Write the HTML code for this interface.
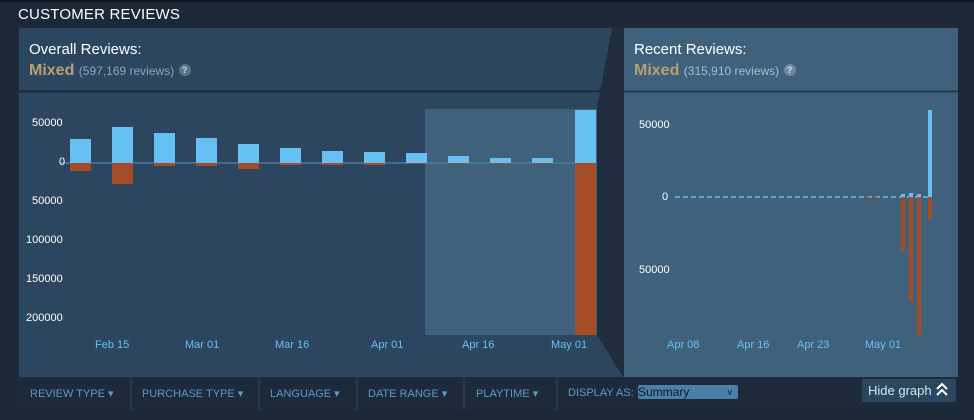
<!DOCTYPE html>
<html><head><style>
body{margin:0;width:974px;height:420px;background:#1b2838;font-family:"Liberation Sans",sans-serif;overflow:hidden;position:relative}
.t{position:absolute;white-space:nowrap}
</style></head><body>
<div style="position:absolute;left:0;top:0;width:974px;height:2px;background:#101822"></div>
<div style="position:absolute;left:0;top:2px;width:974px;height:26px;background:#1c2737"></div>
<div class="t" style="left:18px;top:6px;color:#fff;font-size:15px;letter-spacing:0.2px">CUSTOMER REVIEWS</div>
<svg style="position:absolute;left:0;top:0" width="974" height="420">
<rect x="18" y="27" width="940" height="351" fill="#1f2d3e"/>
<polygon points="19,28 612,28 597,108 597,335 623,377 19,377" fill="#2b465e"/>
<line x1="19" y1="91.5" x2="600" y2="91.5" stroke="#1b2a3a" stroke-width="2"/>
<rect x="624" y="28" width="334" height="349" fill="#3f617b"/>
<line x1="624" y1="91.5" x2="958" y2="91.5" stroke="#253a50" stroke-width="2"/>
<rect x="425" y="109" width="172" height="226" fill="#3f617b"/>
<line x1="60" y1="163" x2="597" y2="163" stroke="#4b7aa0" stroke-width="1.5"/>
<g fill="#66c0f4">
<rect x="70" y="139" width="21" height="24"/><rect x="112" y="127" width="21" height="36"/><rect x="154" y="133" width="21" height="30"/><rect x="196" y="138" width="21" height="25"/><rect x="238" y="144" width="21" height="19"/><rect x="280" y="148" width="21" height="15"/><rect x="322" y="151" width="21" height="12"/><rect x="364" y="152" width="21" height="11"/><rect x="406" y="153" width="21" height="10"/><rect x="448" y="156" width="21" height="7"/><rect x="490" y="158" width="21" height="5"/><rect x="532" y="158" width="21" height="5"/><rect x="575" y="110" width="21" height="53"/>
</g>
<g fill="#a34c25">
<rect x="70" y="163" width="21" height="8"/><rect x="112" y="163" width="21" height="21"/><rect x="154" y="163" width="21" height="3"/><rect x="196" y="163" width="21" height="3"/><rect x="238" y="163" width="21" height="6"/><rect x="280" y="163" width="21" height="2"/><rect x="322" y="163" width="21" height="2"/><rect x="364" y="163" width="21" height="2"/><rect x="406" y="163" width="21" height="1"/><rect x="448" y="163" width="21" height="1"/><rect x="490" y="163" width="21" height="1"/><rect x="532" y="163" width="21" height="1"/><rect x="575" y="163" width="21" height="172"/>
</g>
<line x1="675" y1="197" x2="930" y2="197" stroke="#66c0f4" stroke-width="1.5" stroke-dasharray="5,3"/>
<g fill="#a34c25"><rect x="901" y="197" width="4" height="54"/><rect x="909" y="197" width="4" height="104"/><rect x="917" y="197" width="4" height="138"/><rect x="928" y="197" width="4" height="23"/><rect x="866" y="197" width="4" height="2"/><rect x="874" y="197" width="4" height="2"/></g>
<g fill="#66c0f4"><rect x="928" y="110" width="4" height="87"/><rect x="901" y="194" width="4" height="3"/><rect x="909" y="193" width="4" height="4"/><rect x="917" y="194" width="4" height="3"/></g>
<rect x="18" y="378" width="940" height="32" fill="#1c2a3b"/>
<g stroke="#2f4a63"><line x1="131" y1="378" x2="131" y2="410"/><line x1="259" y1="378" x2="259" y2="410"/><line x1="357" y1="378" x2="357" y2="410"/><line x1="464" y1="378" x2="464" y2="410"/><line x1="557" y1="378" x2="557" y2="410"/></g>
<rect x="862" y="379" width="94" height="23" fill="#2a475e"/>
<path d="M937 389 l5 -5 l5 5 M937 395 l5 -5 l5 5" stroke="#fff" stroke-width="2" fill="none"/>
</svg>
<div class="t" style="left:29px;top:41px;color:#fff;font-size:15px">Overall Reviews:</div>
<div class="t" style="left:29px;top:62px;font-size:16px;color:#b9a074;font-weight:bold">Mixed <span style="font-size:12px;color:#8ba6b6;font-weight:normal">(597,169 reviews)</span> <span style="display:inline-block;width:12px;height:12px;border-radius:6px;background:#5b7386;color:#c6d4df;font-size:9px;text-align:center;line-height:12px;vertical-align:2px">?</span></div>
<div class="t" style="left:634px;top:41px;color:#fff;font-size:15px">Recent Reviews:</div>
<div class="t" style="left:634px;top:62px;font-size:16px;color:#b9a074;font-weight:bold">Mixed <span style="font-size:12px;color:#a6bccb;font-weight:normal">(315,910 reviews)</span> <span style="display:inline-block;width:12px;height:12px;border-radius:6px;background:#6e8ba0;color:#d6e2ea;font-size:9px;text-align:center;line-height:12px;vertical-align:2px">?</span></div>
<div style="color:#fff;font-size:11px">
<div class="t" style="left:32px;top:117px">50000</div><div class="t" style="left:59px;top:156px">0</div><div class="t" style="left:32px;top:195px">50000</div><div class="t" style="left:26px;top:234px">100000</div><div class="t" style="left:26px;top:273px">150000</div><div class="t" style="left:26px;top:312px">200000</div>
<div class="t" style="left:639px;top:119px">50000</div><div class="t" style="left:662px;top:191px">0</div><div class="t" style="left:639px;top:264px">50000</div>
</div>
<div style="color:#66c0f4;font-size:11px">
<div class="t" style="left:95px;top:339px">Feb 15</div><div class="t" style="left:185px;top:339px">Mar 01</div><div class="t" style="left:275px;top:339px">Mar 16</div><div class="t" style="left:371px;top:339px">Apr 01</div><div class="t" style="left:462px;top:339px">Apr 16</div><div class="t" style="left:551px;top:339px">May 01</div>
<div class="t" style="left:667px;top:339px">Apr 08</div><div class="t" style="left:737px;top:339px">Apr 16</div><div class="t" style="left:797px;top:339px">Apr 23</div><div class="t" style="left:865px;top:339px">May 01</div>
</div>
<div style="color:#5b9bc7;font-size:11px">
<div class="t" style="left:30px;top:387px">REVIEW TYPE ▾</div><div class="t" style="left:142px;top:387px">PURCHASE TYPE ▾</div><div class="t" style="left:270px;top:387px">LANGUAGE ▾</div><div class="t" style="left:368px;top:387px">DATE RANGE ▾</div><div class="t" style="left:476px;top:387px">PLAYTIME ▾</div><div class="t" style="left:568px;top:387px">DISPLAY AS:</div>
</div>
<div class="t" style="left:638px;top:385px;width:100px;height:14px;background:#4b7fa8;border-radius:2px;font-size:12px;line-height:14px;color:#0e1a26">Summary<span style="position:absolute;right:6px;font-size:9px">v</span></div>
<div class="t" style="left:868px;top:383px;color:#d0e6f5;font-size:13px">Hide graph</div>
</body></html>
